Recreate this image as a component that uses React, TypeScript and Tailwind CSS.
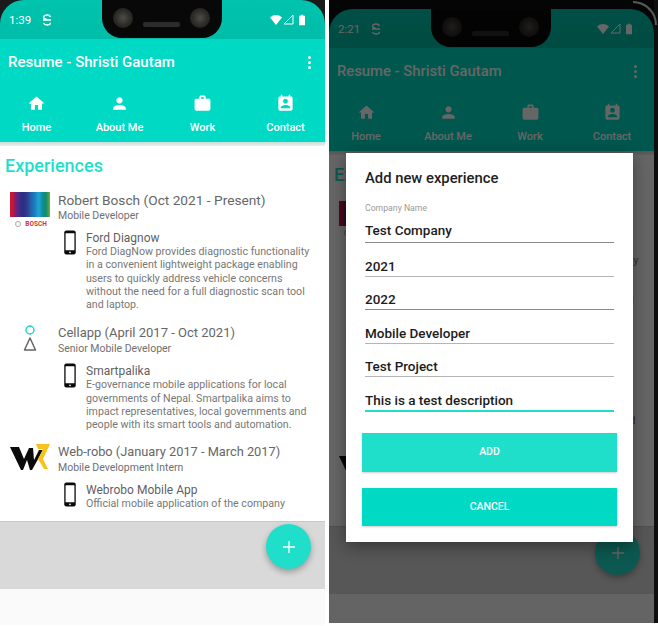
import React from "react";

const font = { fontFamily: "Roboto, sans-serif" };

function Phone({ className = "" }: { className?: string }) {
  return (
    <svg viewBox="0 0 24 48" className={className}>
      <rect x="1" y="1" width="22" height="46" rx="4" fill="#0a0a0a" />
      <rect x="3.5" y="6" width="17" height="33" rx="1" fill="#fff" />
      <circle cx="12" cy="43" r="1.6" fill="#fff" />
    </svg>
  );
}

function Bosch() {
  return (
    <div className="flex w-10 flex-col items-center">
      <div className="h-[25px] w-10 bg-[linear-gradient(90deg,#d4142a_0%,#c2183c_7%,#7a1f6e_14%,#4a2a8c_22%,#23307f_32%,#34388f_42%,#2363a8_52%,#1a7fc0_62%,#22a5d6_72%,#0f8fa0_80%,#0e8a6a_90%,#6fae3c_100%)]" />
      <div className="mt-[3px] flex h-[8px] items-center gap-[4px] pl-[2px]">
        <span className="h-[6px] w-[6px] rounded-full border border-[#aaa]" />
        <span className="text-[6.5px] leading-[8px] font-bold text-[#d5313c]">BOSCH</span>
      </div>
    </div>
  );
}

function Cell() {
  return (
    <svg viewBox="0 0 14 27" className="h-[27px] w-[14px]">
      <circle cx="7" cy="5" r="4" fill="none" stroke="#1fd6c6" strokeWidth="1.4" />
      <path d="M7 13 L12.5 25 H1.500 Z" fill="none" stroke="#666" strokeWidth="1.5" strokeLinejoin="round" />
    </svg>
  );
}

function Webrobo() {
  return (
    <svg viewBox="0 0 40 26" className="h-[26px] w-10">
      <path d="M0 3 L9 3 L14 15 L19 4 L23 4 L24 16 L29 6 L33 6 L22 26 L20 26 L17 16 L13 26 L11 26 Z" fill="#0b0b0b" />
      <path d="M26 0 H40 L33 15 L38 25 H34 L28 15 L33 5 H28 Z" fill="#f6c21c" />
    </svg>
  );
}

function Project({ name, lines }: { name: string; lines: string[] }) {
  return (
    <div className="flex pl-[63px]">
      <Phone className="mt-[-1px] ml-[-1px] h-[25px] w-[16px] shrink-0" />
      <div className="ml-[8px]">
        <div className="text-[12px] leading-[14px] text-[#5f5f5f]">{name}</div>
        <div className="text-[10.65px] leading-[13.3px] text-[#777]">
          {lines.map((l) => (
            <div key={l} className="whitespace-nowrap">{l}</div>
          ))}
        </div>
      </div>
    </div>
  );
}

function Job({ logo, title, role, children, className = "", titleClass }: { logo: React.ReactNode; title: string; role: string; children: React.ReactNode; className?: string; titleClass: string }) {
  return (
    <div className={className}>
      <div className="flex">
        <div className="flex w-[60px] shrink-0 justify-center">{logo}</div>
        <div className="ml-[-2px]">
          <div className={`leading-[16px] whitespace-nowrap text-[#666] ${titleClass}`}>{title}</div>
          <div className="text-[10.5px] leading-[15px] text-[#707070]">{role}</div>
        </div>
      </div>
      {children}
    </div>
  );
}

const Home = () => (
  <svg viewBox="0 0 24 24" className="h-[19px] w-[19px]" fill="#fff"><path d="M10 20v-6h4v6h5v-8h3L12 3 2 12h3v8z" /></svg>
);
const Person = () => (
  <svg viewBox="0 0 24 24" className="h-[19px] w-[19px]" fill="#fff"><path d="M12 12c2.200 0 4-1.800 4-4s-1.800-4-4-4-4 1.800-4 4 1.800 4 4 4zm0 2c-2.700 0-8 1.300-8 4v2h16v-2c0-2.700-5.300-4-8-4z" /></svg>
);
const Work = () => (
  <svg viewBox="0 0 24 24" className="h-[19px] w-[19px]" fill="#fff"><path d="M20 6h-4V4c0-1.100-.9-2-2-2h-4c-1.100 0-2 .9-2 2v2H4c-1.100 0-2 .9-2 2v11c0 1.100.9 2 2 2h16c1.100 0 2-.9 2-2V8c0-1.100-.9-2-2-2zm-6 0h-4V4h4v2z" /></svg>
);
const Contact = () => (
  <svg viewBox="0 0 24 24" className="h-[19px] w-[19px]" fill="#fff"><path fillRule="evenodd" d="M19 3h-1V1h-2v2H8V1H6v2H5c-1.100 0-2 .9-2 2v14c0 1.100.9 2 2 2h14c1.100 0 2-.9 2-2V5c0-1.100-.9-2-2-2zm-7 3c1.700 0 3 1.300 3 3s-1.300 3-3 3-3-1.300-3-3 1.300-3 3-3zm6 12H6v-1c0-2 4-3.100 6-3.100s6 1.100 6 3.100v1z" /></svg>
);

function Tab({ icon, label }: { icon: React.ReactNode; label: string }) {
  return (
    <div className="flex flex-1 flex-col items-center">
      {icon}
      <div className="mt-[8px] text-[11px] leading-[14px] font-medium text-white">{label}</div>
    </div>
  );
}

function Lens() {
  return <span className="h-[20px] w-[20px] rounded-full bg-[radial-gradient(circle,#4a4843_8%,#2c2a26_55%,#1c1b19_100%)]" />;
}

function StatusBar({ time, dim }: { time: string; dim: boolean }) {
  return (
    <div className={`relative flex h-[39px] items-center justify-between rounded-t-[24px] bg-[linear-gradient(180deg,#00c4ae,#00bda8)] pl-[9px] ${dim ? "pr-[22px]" : "pr-[20px]"}`}>
      <div className="flex items-center gap-[11px] pt-[1px] text-white">
        <span className="text-[11.5px] leading-[14px]">{time}</span>
        <svg viewBox="0 0 10 12" className="h-[12px] w-[10px]" fill="none" stroke="#fff" strokeWidth="1.300">
          <path d="M8.500 3C8 1.500 6.500 1 5 1S1.500 1.700 1.500 3.200 3 5 5 5.500M1 6h8M1.500 9c.5 1.500 2 2 3.500 2s3.500-.7 3.500-2.200" />
        </svg>
      </div>
      <div className="absolute top-0 left-[102px] flex h-[38px] w-[120px] items-start justify-between rounded-b-[20px] bg-[#080808] pt-[8px] pr-[12px] pl-[11px]">
        <Lens />
        <span className="mt-[14px] h-[5px] w-[37px] rounded-[2px] bg-[#2c2c2c]" />
        <Lens />
      </div>
      <div className="flex items-center">
        <svg viewBox="0 0 12 10" className="h-[10px] w-[12px]"><path d="M0 2.500C3.500-.8 8.500-.8 12 2.500L6 10z" fill="#fff" /></svg>
        <svg viewBox="0 0 11 11" className="ml-[1px] h-[11px] w-[11px]"><path d="M10 1 V10 H1 Z" fill="none" stroke="#fff" strokeWidth="1" /></svg>
        <svg viewBox="0 0 7 12" className="ml-[5px] h-[12px] w-[6px]"><path d="M2 0h3v1h2v11H0V1h2z" fill="#fff" /></svg>
      </div>
    </div>
  );
}

function Screen({ time, dim = false }: { time: string; dim?: boolean }) {
  return (
    <div className="relative flex w-[325px] flex-col" style={font}>
      <StatusBar time={time} dim={dim} />
      <div className="bg-[#00d9c3]">
        <div className={`flex h-[46px] items-center justify-between pl-[8px] ${dim ? "pr-[17px]" : "pr-[14px]"}`}>
          <span className={`font-medium text-white ${dim ? "text-[14.8px]" : "text-[15px]"}`}>Resume - Shristi Gautam</span>
          <span className="flex flex-col gap-[2px]">
            <i className="h-[3px] w-[3px] rounded-full bg-white" />
            <i className="h-[3px] w-[3px] rounded-full bg-white" />
            <i className="h-[3px] w-[3px] rounded-full bg-white" />
          </span>
        </div>
        <div className={`flex h-[57px] pt-[9px] ${dim ? "ml-[-4px] w-[328px]" : "ml-[-5px] w-[332px]"}`}>
          <Tab icon={<Home />} label="Home" />
          <Tab icon={<Person />} label="About Me" />
          <Tab icon={<Work />} label="Work" />
          <Tab icon={<Contact />} label="Contact" />
        </div>
      </div>
      <div className="h-[4px] bg-[linear-gradient(180deg,#c9dcd9,#efefef)]" />
      <div className={`overflow-hidden bg-white pt-[7px] ${dim ? "h-[371px]" : "h-[375px]"}`}>
        <div className="pl-[5px] text-[18px] leading-[25px] font-medium text-[#1fdfcb]">Experiences</div>
        <Job className="mt-[14px]" logo={<Bosch />} titleClass="text-[13.7px]" title="Robert Bosch (Oct 2021 - Present)" role="Mobile Developer">
          <div className="mt-[3px]">
            <Project
              name="Ford Diagnow"
              lines={[
                "Ford DiagNow provides diagnostic functionality",
                "in a convenient lightweight package enabling",
                "users to quickly address vehicle concerns",
                "without the need for a full diagnostic scan tool",
                "and laptop.",
              ]}
            />
          </div>
        </Job>
        <Job className="mt-[14px]" logo={<Cell />} titleClass="text-[13px]" title="Cellapp (April 2017 - Oct 2021)" role="Senior Mobile Developer">
          <div className="mt-[8px]">
            <Project
              name="Smartpalika"
              lines={[
                "E-governance mobile applications for local",
                "governments of Nepal. Smartpalika aims to",
                "impact representatives, local governments and",
                "people with its smart tools and automation.",
              ]}
            />
          </div>
        </Job>
        <Job className="mt-[12px]" logo={<Webrobo />} titleClass="text-[12.8px]" title="Web-robo (January 2017 - March 2017)" role="Mobile Development Intern">
          <div className="mt-[8px]">
            <Project name="Webrobo Mobile App" lines={["Official mobile application of the company"]} />
          </div>
        </Job>
      </div>
      <div className="h-[68px] border-t border-[#c8c8c8] bg-[#d9d9d9]" />
      <div className={`bg-[#fafafa] ${dim ? "h-[29px]" : "h-[36px]"}`} />
      <div className={`absolute right-[14px] flex h-[45px] w-[45px] items-center justify-center rounded-full bg-[#1fdfcb] shadow-[0_3px_6px_rgba(0,0,0,0.3)] ${dim ? "top-[521px]" : "top-[524px]"}`}>
        <svg viewBox="0 0 12 12" className="h-[12px] w-[12px]" stroke="#fff" strokeWidth="1.300"><path d="M6 0v12M0 6h12" /></svg>
      </div>
    </div>
  );
}

function Field({ value, label, lineClass = "border-[#b5b5b5]" }: { value: string; label?: string; lineClass?: string }) {
  return (
    <div className={`border-b pb-[1px] ${lineClass}`}>
      {label && <div className="text-[8.7px] leading-[10px] text-[#9a9a9a]">{label}</div>}
      <div className={`text-[13.5px] leading-[17px] font-medium text-[#1c1c1c] ${label ? "mt-[9px] pb-[2px]" : ""}`}>{value}</div>
    </div>
  );
}

function Dialog() {
  return (
    <div className="absolute top-[153px] left-[17px] flex h-[389px] w-[287px] flex-col bg-white shadow-[0_4px_16px_rgba(0,0,0,0.4)]" style={font}>
      <div className="pt-[15px] pl-[19px] text-[14.8px] leading-[20px] font-medium text-[#1e1e1e]">Add new experience</div>
      <div className="mt-[15px] flex flex-col gap-[14.5px] px-[19px]">
        <Field label="Company Name" value="Test Company" lineClass="border-[#8a8a8a]" />
        <Field value="2021" />
        <Field value="2022" lineClass="border-[#8a8a8a]" />
        <Field value="Mobile Developer" />
        <Field value="Test Project" />
        <Field value="This is a test description" lineClass="border-b-2 border-[#1fdfcb]" />
      </div>
      <div className="mt-[21px] flex flex-col gap-[16px] px-[16px]">
        <div className="flex h-[39px] items-center justify-center bg-[#1fdfcb] text-[10.5px] font-medium text-white shadow-[0_1px_2px_rgba(0,0,0,0.2)]">ADD</div>
        <div className="flex h-[38px] items-center justify-center bg-[#00d9c3] text-[10.5px] font-medium text-white shadow-[0_1px_2px_rgba(0,0,0,0.2)]">CANCEL</div>
      </div>
    </div>
  );
}

export default function App() {
  return (
    <div className="flex h-[626px] w-[658px] overflow-hidden bg-white">
      <div className="relative h-[625px] w-[325px] bg-[#1a1a1a]">
        <Screen time="1:39" />
      </div>
      <div className="relative ml-[4px] h-[623px] w-[329px] bg-[#0e0e0e] pt-[9px]">
        <Screen time="2:21" dim />
        <div className="absolute top-0 left-0 h-full w-[325px] bg-black/60" />
        <div className="absolute top-[1px] right-[1px] h-[24px] w-[24px] rounded-tr-[24px] border-t-2 border-r-2 border-[#5a5a5a]" />
        <Dialog />
      </div>
    </div>
  );
}
